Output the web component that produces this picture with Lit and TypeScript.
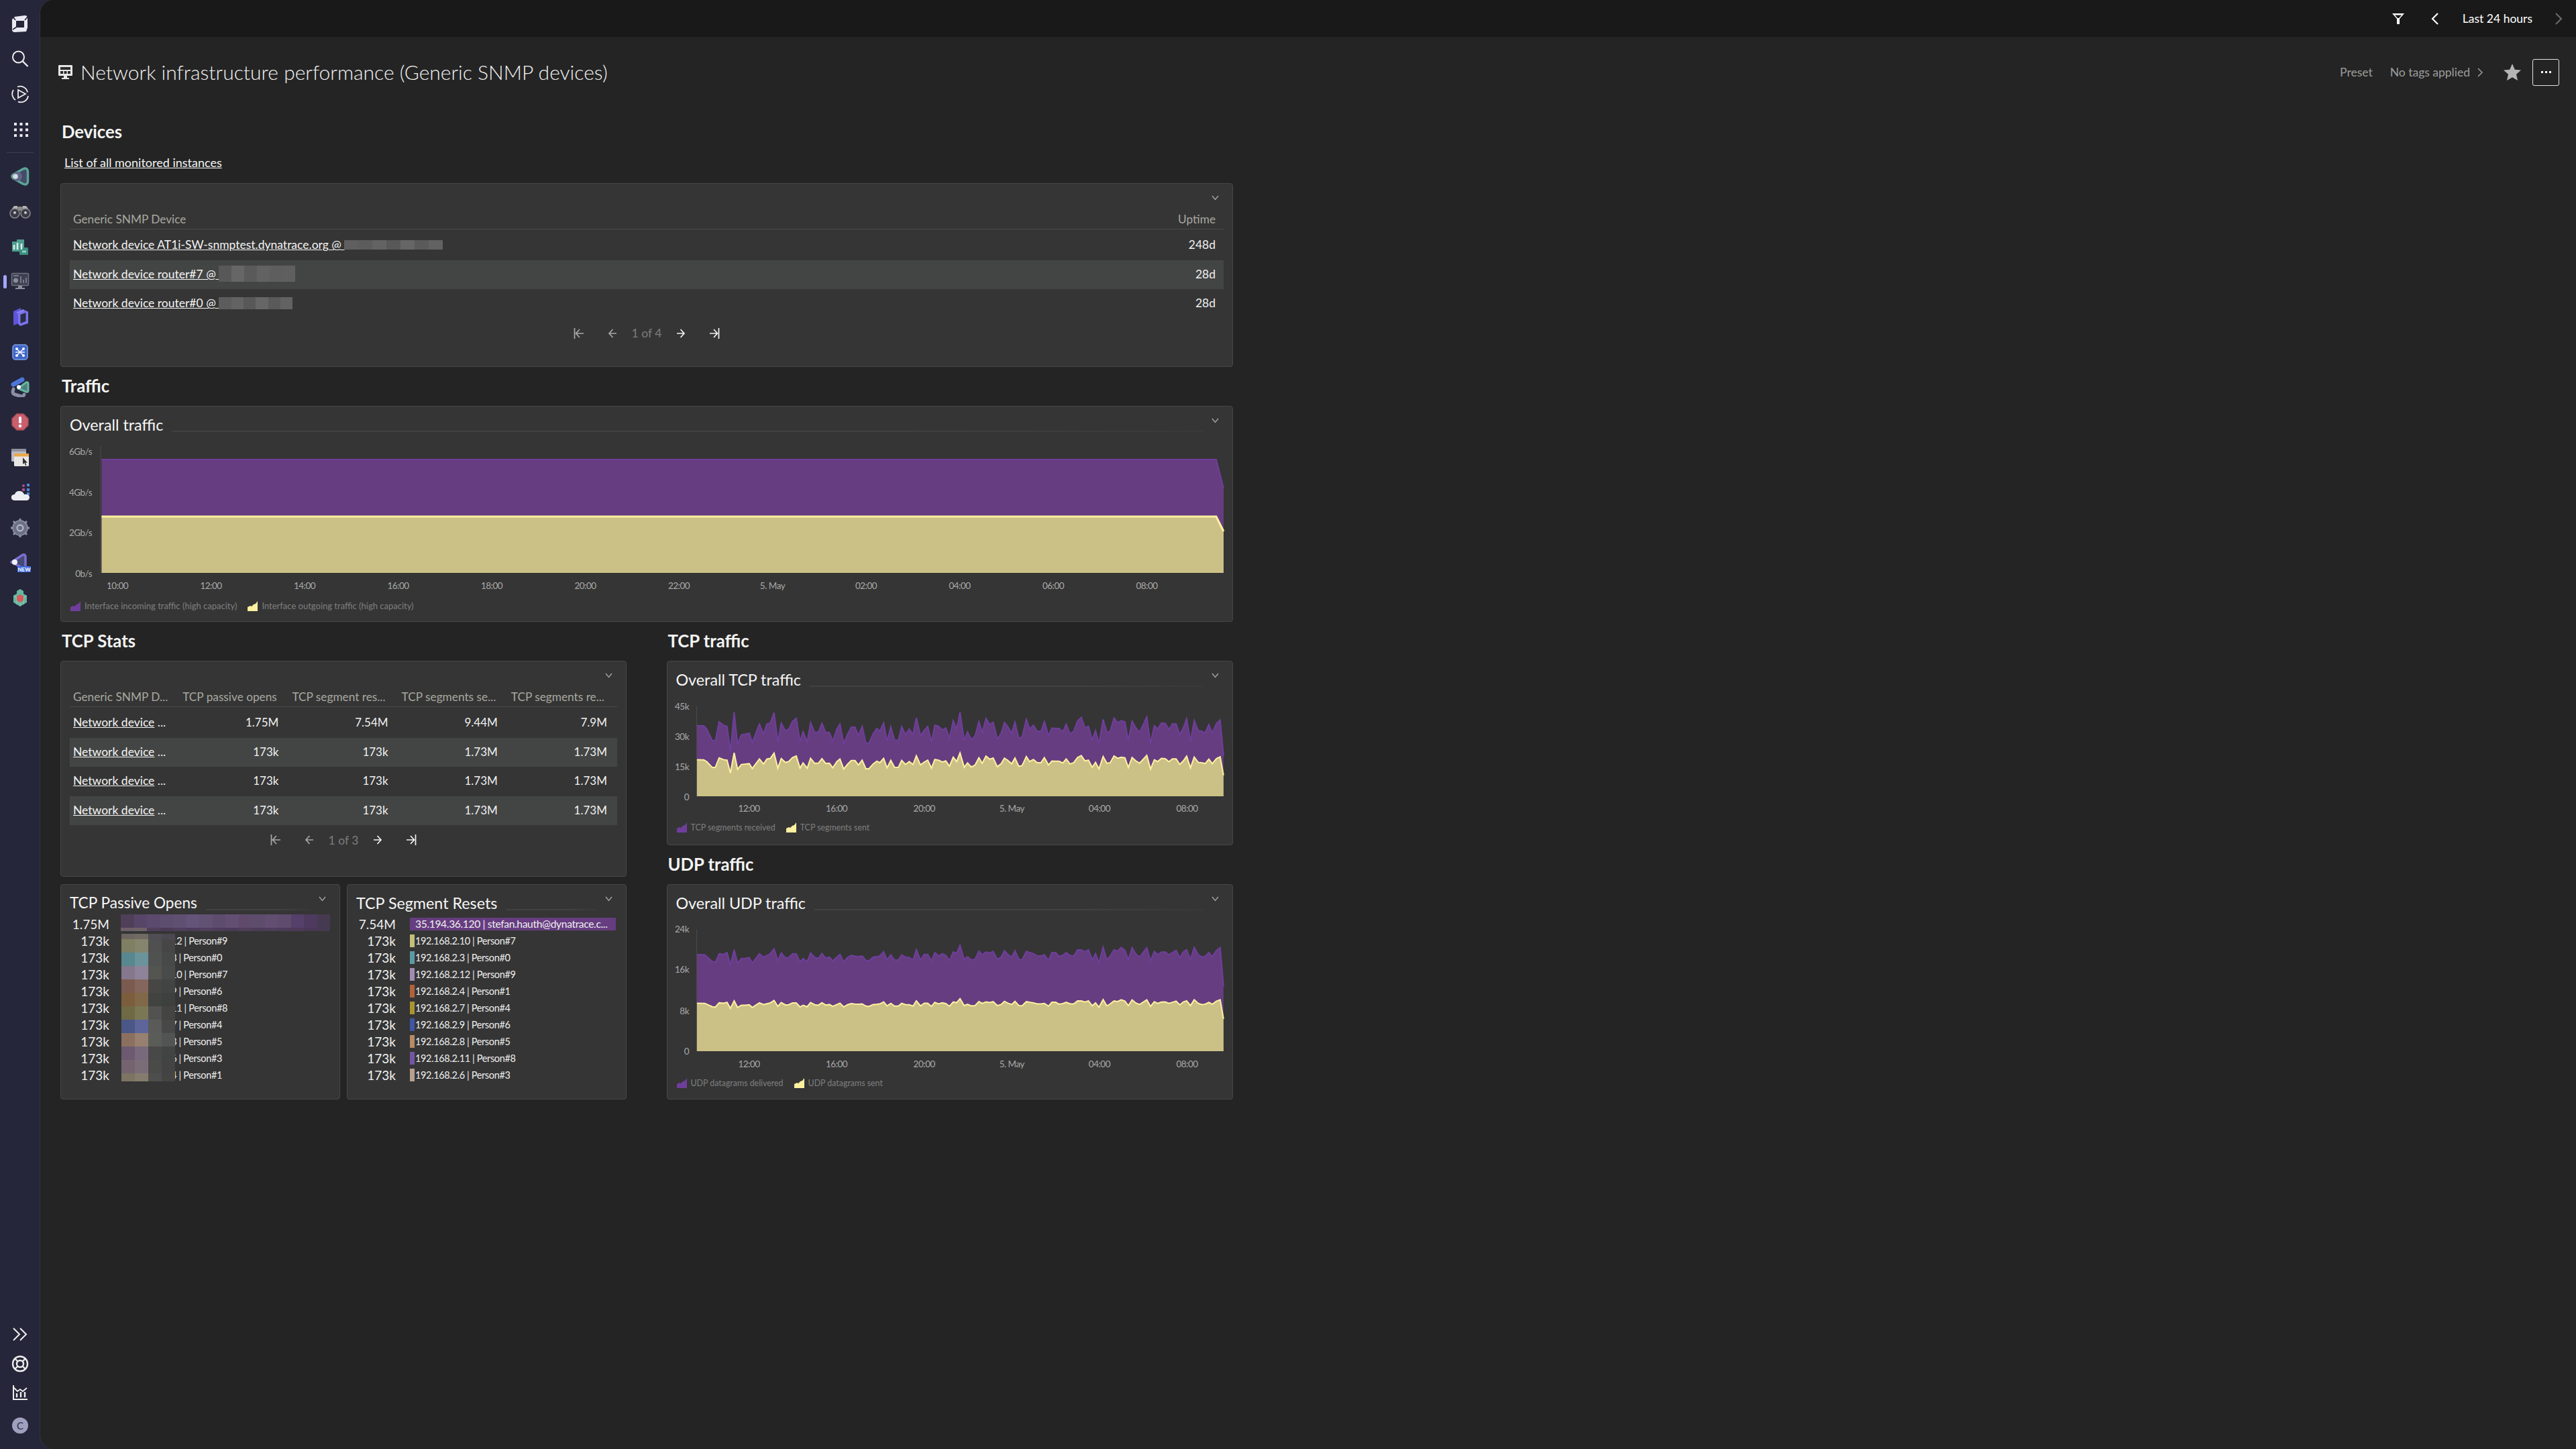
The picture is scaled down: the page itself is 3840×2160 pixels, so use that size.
import { LitElement, html, css, svg } from "lit";
import { customElement } from "lit/decorators.js";

const tcpTrace = [104,425,122,426,130,440,145,492,153,491,163,408,175,424,184,428,193,540,203,365,212,508,222,466,232,463,243,459,251,500,270,418,281,462,290,418,299,413,309,367,319,497,328,414,339,448,348,441,358,406,368,392,378,497,386,452,397,498,406,412,417,456,427,454,436,415,446,456,456,455,465,495,476,440,484,418,494,505,504,465,514,432,524,432,533,470,543,428,553,503,561,503,572,462,582,437,590,450,600,413,609,495,619,430,629,490,639,491,648,430,658,465,668,440,678,465,687,390,698,470,708,445,717,428,727,497,736,423,746,428,756,445,765,435,775,480,785,403,794,440,803,365,814,490,823,453,833,488,843,470,853,407,862,455,872,393,882,420,891,410,902,485,912,460,921,411,930,430,940,460,949,410,959,482,968,475,979,397,988,440,998,423,1008,450,1018,450,1027,407,1038,470,1047,436,1057,437,1066,438,1076,453,1085,418,1095,462,1105,450,1115,405,1125,388,1135,435,1144,428,1154,490,1163,447,1172,505,1183,397,1193,455,1202,450,1212,391,1222,412,1231,403,1241,408,1250,492,1260,405,1270,435,1280,455,1299,386,1309,505,1319,425,1328,440,1338,413,1348,415,1358,442,1367,417,1377,417,1387,465,1396,435,1405,394,1415,495,1425,402,1436,448,1445,450,1454,458,1464,420,1473,458,1484,415,1494,400,1503,560];
const udpTrace = [104,459,125,460,145,490,153,493,163,455,175,458,184,450,193,505,203,437,212,497,222,477,232,476,243,472,251,497,270,455,281,470,290,463,299,455,309,433,319,487,328,452,339,473,348,472,358,455,368,456,378,492,386,477,397,490,406,452,417,472,427,476,436,454,446,475,456,470,465,487,476,470,484,458,494,492,504,472,514,462,524,466,533,468,543,465,553,485,561,487,572,470,582,468,590,465,600,446,609,483,619,460,629,484,639,484,648,460,658,470,668,472,678,484,687,437,698,483,708,458,717,458,727,487,736,450,746,465,756,455,765,462,775,486,785,447,794,453,803,418,814,480,823,468,833,483,843,480,853,443,862,460,872,447,882,452,891,445,902,480,912,470,921,442,930,458,940,470,949,442,959,480,968,482,979,445,988,450,998,455,1008,465,1018,465,1027,460,1038,485,1047,450,1057,450,1066,467,1076,462,1085,450,1095,463,1105,465,1115,438,1125,438,1135,447,1144,437,1154,482,1163,455,1172,495,1183,426,1193,483,1202,465,1212,438,1222,443,1231,427,1241,440,1250,482,1260,428,1270,457,1280,470,1299,428,1309,487,1319,445,1328,460,1338,448,1348,447,1358,460,1367,450,1377,440,1387,473,1396,447,1405,437,1415,480,1425,427,1436,460,1445,470,1454,467,1464,450,1473,468,1484,440,1494,428,1503,600];

type Pt = [number, number];

function scale(trace: number[], yOff: number, base: number, ratio: number) {
  // trace was read off a zoomed crop, so map it back to chart pixels
  const top: Pt[] = [];
  const low: Pt[] = [];
  for (let i = 0; i < trace.length; i += 2) {
    const x = trace[i] / 1.782 - 27.5;
    top.push([x, trace[i + 1] / 3 + yOff]);
    low.push([x, (base - (base - trace[i + 1]) * ratio) / 3 + yOff]);
  }
  return { top, low };
}

function pts(p: Pt[]) {
  return p.map((q) => `${q[0].toFixed(1)},${q[1].toFixed(1)}`).join(" ");
}

function areas(top: Pt[], low: Pt[], bottom: number, sw: number) {
  const x0 = top[0][0];
  const x1 = top[top.length - 1][0];
  return svg`
    <polygon points="${x0},${bottom} ${pts(top)} ${x1},${bottom}" fill="#663d80"></polygon>
    <polyline points="${pts(top)}" fill="none" stroke="#6f3e9c" stroke-width="2"></polyline>
    <polygon points="${x0},${bottom} ${pts(low)} ${x1},${bottom}" fill="#cbc186"></polygon>
    <polyline points="${pts(low)}" fill="none" stroke="#fdf1a0" stroke-width="${sw}"></polyline>
  `;
}

const chev = html`<svg class="chev" width="11" height="8" viewBox="0 0 11 8"><path d="M1 1l4.500 5.500L10 1" fill="none" stroke="#a8a8a8" stroke-width="1.300"/></svg>`;

const legendIcon = (c: string) => html`<svg width="15" height="15" viewBox="0 0 15 15"><path d="M0 15V9l4-2 2 1 3-3 3-1 3-4v15z" fill="${c}"/></svg>`;

const grayA = ["#5a5a5a", "#5f5f5f", "#585858", "#626262", "#5c5c5c", "#666666", "#5e5e5e", "#636363"];

@customElement("app-root")
export class AppRoot extends LitElement {
  static styles = css`
    :host {
      display: flex;
      width: 100%;
      height: 2160px;
      background: #252639;
      font-family: Lato, "Noto Sans", sans-serif;
      color: #fff;
      overflow: hidden;
    }
    .side {
      width: 60px;
      flex: none;
      display: flex;
      flex-direction: column;
      align-items: center;
      padding: 9px 0 13px;
      box-sizing: border-box;
    }
    .side .it {
      height: 52.4px;
      width: 60px;
      display: flex;
      align-items: center;
      justify-content: center;
      position: relative;
      flex: none;
    }
    .side .it.lo {
      height: 43.5px;
    }
    .side .it.me {
      margin-top: 5.5px;
    }
    .side hr {
      border: 0;
      height: 1px;
      width: 40px;
      background: #3d3e52;
      margin: 8.5px 0;
      flex: none;
    }
    .side .active::before {
      content: "";
      position: absolute;
      left: 5px;
      top: 16px;
      width: 5px;
      height: 20px;
      border-radius: 2.5px;
      background: #a3a6ff;
    }
    .side .spacer {
      flex: 1;
    }
    .avatar {
      width: 24px;
      height: 24px;
      border-radius: 50%;
      background: #a09fbd;
      color: #20304f;
      font-size: 15px;
      line-height: 24px;
      text-align: center;
    }
    .main {
      flex: 1;
      min-width: 0;
      background: #242424;
      border-radius: 20px 0 0 20px;
      box-shadow: -1px 0 0 #33344a;
      overflow: hidden;
      display: flex;
      flex-direction: column;
    }
    .top {
      height: 55px;
      flex: none;
      background: #191919;
      display: flex;
      align-items: center;
      justify-content: flex-end;
      padding-right: 20px;
      font-size: 17.5px;
    }
    .top .filter {
      margin-right: 39px;
    }
    .top .prev {
      margin-right: 35px;
    }
    .top .next {
      margin-left: 33px;
    }
    .titlebar {
      height: 105px;
      flex: none;
      display: flex;
      align-items: center;
      padding: 0 25px 0 27px;
    }
    .titlebar .t-ic {
      margin-right: 12px;
    }
    h1 {
      font-weight: 300;
      font-size: 30px;
      margin: -2px 0 0;
      flex: 1;
      color: #f2f2f2;
    }
    .titlebar .pre {
      color: #9c9c9c;
      font-size: 17.5px;
      margin-right: 26px;
    }
    .titlebar .tags {
      color: #9c9c9c;
      font-size: 17.5px;
      margin-right: 11px;
    }
    .titlebar .star {
      margin: 0 17px 0 30px;
    }
    .more {
      width: 40px;
      height: 40px;
      box-sizing: border-box;
      border: 1.5px solid #e4e4e4;
      border-radius: 3px;
      display: flex;
      align-items: center;
      justify-content: center;
      gap: 3px;
    }
    .more i {
      width: 3px;
      height: 3px;
      background: #fff;
    }
    .page {
      width: 1748px;
      margin-left: 30px;
      padding-top: 18px;
    }
    h2 {
      height: 36px;
      line-height: 36px;
      font-size: 25.7px;
      font-weight: 700;
      margin: 10px 0 12px;
      padding-left: 2px;
      color: #f4f4f4;
    }
    h2.first {
      margin: 0;
    }
    .listlink {
      margin: 14px 0 17px 6px;
      height: 28px;
      line-height: 28px;
      font-size: 18px;
    }
    a {
      color: #f4f4f4;
      text-decoration: underline;
    }
    .card {
      background: #353535;
      border: 1px solid #474747;
      border-radius: 4px;
      box-sizing: border-box;
      padding: 8px 13px 0;
      position: relative;
    }
    .h274 { height: 274px; }
    .h275 { height: 275px; }
    .h321 { height: 321px; }
    .h322 { height: 322px; }
    .head {
      height: 38px;
      display: flex;
      flex: none;
    }
    .head.short {
      height: 29px;
    }
    .head .ttl {
      font-size: 23.3px;
      line-height: 38px;
      color: #f6f6f6;
      white-space: nowrap;
      margin-right: 13px;
    }
    .narrow .head .ttl {
      font-size: 22.6px;
    }
    .head .rule {
      flex: 1;
      height: 2px;
      margin: 28px 12px 0 0;
      background: linear-gradient(90deg, #414141 70%, #393939);
    }
    .head .chev {
      margin: 9px 7px 0 auto;
      flex: none;
    }
    .thead,
    .trow {
      display: grid;
      align-items: center;
      font-size: 17.5px;
    }
    .one {
      grid-template-columns: 1fr 90px;
    }
    .five {
      grid-template-columns: repeat(5, 1fr);
    }
    .thead {
      height: 30px;
      color: #a8a8a0;
      font-size: 17.25px;
      border-bottom: 1px solid #4a4a4a;
      margin-bottom: 2px;
    }
    .trow {
      height: 43.5px;
      box-sizing: border-box;
      padding-bottom: 2px;
      color: #f0f0f0;
    }
    .trow.alt {
      background: #434544;
    }
    .c {
      padding: 0 15px 0 5px;
      white-space: nowrap;
      min-width: 0;
    }
    .c.r {
      text-align: right;
    }
    .five .c.r {
      font-size: 17px;
    }
    .one .c.r {
      padding-right: 12px;
    }
    .devlink {
      display: flex;
      align-items: center;
    }
    .mos {
      display: inline-flex;
      flex-wrap: nowrap;
    }
    .mos span {
      display: block;
      flex: 1;
    }
    .pager {
      height: 44px;
      display: flex;
      align-items: center;
      justify-content: center;
      font-size: 17.5px;
      color: #7d7d7d;
    }
    .pager .lbl {
      margin: 0 22px 0 22px;
    }
    .pager svg.gap {
      margin-right: 35px;
    }
    .pager svg.gap2 {
      margin-left: 35px;
    }
    .plot {
      display: block;
      overflow: visible;
    }
    .plot text {
      font-size: 13.5px;
      fill: #a9a9a9;
      letter-spacing: -0.5px;
      font-family: Lato, "Noto Sans", sans-serif;
    }
    .legend {
      display: flex;
      align-items: center;
      height: 30px;
      margin-left: 1px;
      color: #7f7f7f;
      font-size: 13px;
    }
    .legend.sm {
      font-size: 12.4px;
    }
    .legend svg {
      margin-right: 6px;
    }
    .legend span {
      margin-right: 16px;
    }
    .cols {
      display: grid;
      grid-template-columns: 844px 844.5px;
      column-gap: 59.5px;
    }
    .pair {
      display: grid;
      grid-template-columns: 1fr 1fr;
      gap: 10px;
      margin-top: 11px;
    }
    .tr {
      height: 25px;
      display: flex;
      align-items: center;
      padding-right: 2px;
    }
    .tr .val {
      width: 59px;
      text-align: right;
      font-size: 19px;
      color: #f0f0f0;
      flex: none;
      margin-right: 18px;
    }
    .wide .tr .val {
      margin-right: 21px;
    }
    .tr .bar {
      flex: none;
      width: 6.5px;
      height: 19px;
    }
    .tr .txt {
      font-size: 14.5px;
      letter-spacing: -0.35px;
      color: #eee;
      padding-left: 1.5px;
      white-space: nowrap;
    }
    .tr .big {
      flex: 1;
      height: 19px;
      background: #663d80;
      font-size: 15.6px;
      letter-spacing: -0.35px;
      line-height: 19px;
      padding-left: 8px;
      white-space: nowrap;
      overflow: hidden;
      color: #eee;
    }
    .narrow .tr .txt {
      padding-left: 2px;
    }
    .cover {
      position: absolute;
      left: 89px;
      display: grid;
    }
    .cover span {
      display: block;
    }
  `;

  private sideIcons() {
    return [
      html`<svg width="28" height="28" viewBox="0 0 28 28"><path d="M6 4l15-2q4 0 4 4v14l-2 6-17 1q-4 0-4-4V8z" fill="#e9e9f2"/><path d="M8 10h12v10H8z" fill="#252639"/><path d="M3 23l6-4M21 9l5-6M7 9L4 5" stroke="#252639" stroke-width="1.600"/></svg>`,
      html`<svg width="28" height="28" viewBox="0 0 28 28"><circle cx="11.500" cy="11" r="8.500" fill="none" stroke="#eee" stroke-width="2"/><path d="M17.500 17l8 8" stroke="#eee" stroke-width="2.400"/></svg>`,
      html`<svg width="28" height="28" viewBox="0 0 28 28"><path d="M10 3.500a11 11 0 0 1 15 8M26 17a11 11 0 0 1-15 8.600M7 23a11 11 0 0 1-3-15" fill="none" stroke="#eee" stroke-width="1.800"/><path d="M11 8l11 6-11 6z" fill="none" stroke="#eee" stroke-width="1.800"/></svg>`,
      html`<svg width="24" height="24" viewBox="0 0 24 24" fill="#e9e9f0"><rect x="3" y="3" width="4" height="4"/><rect x="11.500" y="3" width="4" height="4"/><rect x="20" y="3" width="4" height="4"/><rect x="3" y="11.500" width="4" height="4"/><rect x="11.500" y="11.500" width="4" height="4"/><rect x="20" y="11.500" width="4" height="4"/><rect x="3" y="20" width="4" height="4"/><rect x="11.500" y="20" width="4" height="4"/><rect x="20" y="20" width="4" height="4"/></svg>`,
    ];
  }

  private appIcons() {
    return [
      html`<svg width="30" height="30" viewBox="0 0 30 30"><path d="M5 12L19 4q7-3 7.500 4v14q-.5 7-7.500 4L5 18q-4-3 0-6z" fill="#454b68" stroke="#5ba596" stroke-width="3.500" stroke-linejoin="round"/><circle cx="11" cy="15" r="7" fill="#5f678a"/><circle cx="8" cy="15" r="3.800" fill="#d8dce2"/></svg>`,
      html`<svg width="32" height="24" viewBox="0 0 32 24"><path d="M4 8l3-4h5l1 4zM19 8l1-4h5l3 4z" fill="#b5b5b5"/><rect x="13" y="5" width="6" height="6" fill="#8c8c8c"/><circle cx="8" cy="15" r="7" fill="#3a3a44" stroke="#8a8a90" stroke-width="1.500"/><circle cx="24" cy="15" r="7" fill="#3a3a44" stroke="#8a8a90" stroke-width="1.500"/><circle cx="8" cy="14" r="2" fill="#c9c9d0"/><circle cx="24" cy="14" r="2" fill="#c9c9d0"/></svg>`,
      html`<svg width="28" height="28" viewBox="0 0 28 28"><path d="M2 6h7V3h11v18H2z" fill="#4e9e90"/><rect x="13" y="15" width="13" height="11" rx="1" fill="#3b8d7f"/><path d="M5 18v-7M10 18V8M16 18v-9" stroke="#d9efe9" stroke-width="2.500"/><path d="M17 21h6" stroke="#8fd0c2" stroke-width="3"/></svg>`,
      html`<svg width="30" height="28" viewBox="0 0 30 28"><rect x="2.500" y="1.500" width="25" height="18" rx="1.500" fill="#3d4050" stroke="#6f7280" stroke-width="1.500"/><path d="M5 5h8" stroke="#8b8e9b" stroke-width="1.500"/><circle cx="8.500" cy="12" r="3.500" fill="#8b8e9b"/><path d="M16 16V6M20 16v-5M24 16V8" stroke="#8b8e9b" stroke-width="1.500"/><path d="M12 20h6v3h4v2H8v-2h4z" fill="#8b8e9b"/></svg>`,
      html`<svg width="28" height="30" viewBox="0 0 28 30"><path d="M4 7l11-5v22L4 28z" fill="#5e55d8"/><path d="M8 9l10-5 4 2-10 5z" fill="#8780f0"/><path d="M11 10l12-4 3 2v17l-12 4-3-3z" fill="#7a72ee"/><path d="M14.500 12l8-3v13l-8 3z" fill="#2c2d40"/></svg>`,
      html`<svg width="26" height="26" viewBox="0 0 26 26"><rect x="2" y="2" width="22" height="22" rx="4" fill="#3f66c8" stroke="#7ea0e8" stroke-width="1.500"/><path d="M8 8l10 10M18 8L8 18M6 13h14" stroke="#eef2fb" stroke-width="1.500"/><circle cx="8" cy="8" r="2" fill="#fff"/><circle cx="18" cy="8" r="2" fill="#fff"/><circle cx="8" cy="18" r="2" fill="#fff"/><circle cx="18" cy="18" r="2" fill="#fff"/></svg>`,
      html`<svg width="30" height="30" viewBox="0 0 30 30"><path d="M5 18l-1 4q0 3 3 4l10 3q3 0 4-3" fill="none" stroke="#8b8ea4" stroke-width="5" stroke-linecap="round"/><path d="M5 11L18 4" stroke="#4c77d8" stroke-width="7" stroke-linecap="round"/><path d="M12 17l12-9q3-1 3 2v10q0 3-3 2z" fill="#4e7f80" stroke="#66b5a0" stroke-width="3" stroke-linejoin="round"/><circle cx="13" cy="15" r="3" fill="#fff"/></svg>`,
      html`<svg width="28" height="28" viewBox="0 0 28 28"><path d="M9 2h10l7 7v10l-7 7H9l-7-7V9z" fill="#c95f6d" stroke="#a64a56" stroke-width="1.500"/><rect x="12" y="6" width="4" height="10" rx="1.500" fill="#fff"/><circle cx="14" cy="20" r="2.300" fill="#fff"/></svg>`,
      html`<svg width="28" height="28" viewBox="0 0 28 28"><rect x="1" y="1" width="22" height="19" rx="1.500" fill="#b9bac6"/><rect x="1" y="1" width="22" height="4" fill="#8f909c"/><rect x="5" y="8" width="22" height="19" rx="1.500" fill="#e9e7e6"/><rect x="5" y="8" width="22" height="4.500" fill="#e8a94a"/><path d="M18 14v10l2.500-2 1.500 4 1.500-.6-1.500-3.600h3z" fill="#333"/></svg>`,
      html`<svg width="30" height="30" viewBox="0 0 30 30"><rect x="25" y="2" width="4" height="4" fill="#4f87d8"/><rect x="25" y="9" width="4" height="4" fill="#4f87d8"/><rect x="25" y="15" width="4" height="4" fill="#4f87d8"/><circle cx="20" cy="5" r="2" fill="#b34a98"/><circle cx="20" cy="11" r="2.300" fill="#b34a98"/><path d="M6 27q-5-1-4-6 1-3 5-3 1-5 7-5 5 0 7 5 7-1 8 4 0 5-5 5z" fill="#eceef4"/></svg>`,
      html`<svg width="30" height="30" viewBox="0 0 30 30"><circle cx="15" cy="15" r="11" fill="#6b7085" stroke="#8e92a6" stroke-width="1.500"/><path d="M15 1v4M15 25v4M1 15h4M25 15h4M5 5l3 3M22 22l3 3M5 25l3-3M22 8l3-3" stroke="#8e92a6" stroke-width="3"/><circle cx="15" cy="15" r="4.500" fill="none" stroke="#c2c4d0" stroke-width="1.800"/></svg>`,
      html`<svg width="32" height="30" viewBox="0 0 32 30"><path d="M3 14L20 3q4-1 4 3v14q0 4-4 3z" fill="#444a78" stroke="#7c6fd0" stroke-width="3.500" stroke-linejoin="round"/><circle cx="8" cy="14" r="4" fill="#f2f2f6"/><rect x="12" y="20" width="20" height="9" rx="1" fill="#3a6ae0"/><text x="22" y="27.500" text-anchor="middle" font-size="8" font-weight="700" fill="#fff" font-family="Lato, sans-serif">NEW</text></svg>`,
      html`<svg width="26" height="28" viewBox="0 0 26 28"><path d="M13 1l5 3v4l5 3v10l-5 3-5 3-5-3-5-3V11l5-3V4z" fill="#66b5a0"/><path d="M3 11l5 3 5-3 5 3 5-3M13 11v16M8 14v10M18 14v10" stroke="#8fd0bd" stroke-width="1" fill="none"/><path d="M13 9l5 3v6l-5 3-5-3v-6z" fill="#d95a5a"/></svg>`,
    ];
  }

  private bottomIcons() {
    return [
      html`<svg width="28" height="24" viewBox="0 0 28 24"><path d="M4 3l9 9-9 9M14 3l9 9-9 9" fill="none" stroke="#eee" stroke-width="2"/></svg>`,
      html`<svg width="28" height="28" viewBox="0 0 28 28"><circle cx="14" cy="14" r="11" fill="none" stroke="#eee" stroke-width="2.400"/><circle cx="14" cy="14" r="5" fill="none" stroke="#eee" stroke-width="2.400"/><path d="M6 6l4.500 4.500M22 6l-4.500 4.500M6 22l4.500-4.500M22 22l-4.500-4.500" stroke="#eee" stroke-width="2.400"/></svg>`,
      html`<svg width="26" height="26" viewBox="0 0 26 26"><path d="M3 2v21h21" fill="none" stroke="#eee" stroke-width="2"/><path d="M3 5l6 6 4-3 4 3 6-5" fill="none" stroke="#eee" stroke-width="1.800"/><path d="M8 20v-6M14 20v-8M20 20v-8" stroke="#eee" stroke-width="2.400"/></svg>`,
    ];
  }

  private pager(label: string) {
    const g = "#a8a8a8";
    return html`<div class="pager">
      <svg class="gap" width="16" height="18" viewBox="0 0 16 18"><path d="M1.500 1v16M15 9H4M9 3L3.500 9 9 15" fill="none" stroke="${g}" stroke-width="1.700"/></svg>
      <svg width="14" height="18" viewBox="0 0 14 18"><path d="M13 9H2M7.500 3L2 9l5.500 6" fill="none" stroke="${g}" stroke-width="1.700"/></svg>
      <span class="lbl">${label}</span>
      <svg width="14" height="18" viewBox="0 0 14 18"><path d="M1 9h11M6.500 3L12 9l-5.500 6" fill="none" stroke="#f2f2f2" stroke-width="1.700"/></svg>
      <svg class="gap2" width="16" height="18" viewBox="0 0 16 18"><path d="M14.500 1v16M1 9h11M7 3l5.500 6L7 15" fill="none" stroke="#f2f2f2" stroke-width="1.700"/></svg>
    </div>`;
  }

  private mosaic(n: number, w: number, h: number, seed: number) {
    const cells = [];
    for (let i = 0; i < n; i++) cells.push(grayA[(i * 3 + seed) % grayA.length]);
    return html`<span class="mos" style="width:${w}px;height:${h}px">${cells.map((c) => html`<span style="background:${c}"></span>`)}</span>`;
  }

  private head(title?: string) {
    if (!title) return html`<div class="head short">${chev}</div>`;
    return html`<div class="head"><span class="ttl">${title}</span><span class="rule"></span>${chev}</div>`;
  }

  private devices() {
    const rows = [
      ["Network device AT1i-SW-snmptest.dynatrace.org @", "248d", 7, 147, 14, 1, false],
      ["Network device router#7 @", "28d", 6, 114, 24, 2, true],
      ["Network device router#0 @", "28d", 6, 110, 18, 4, false],
    ] as const;
    return html`<div class="card h274">
      ${this.head()}
      <div class="thead one"><div class="c">Generic SNMP Device</div><div class="c r">Uptime</div></div>
      ${rows.map((r) => html`<div class="trow one ${r[6] ? "alt" : ""}">
        <div class="c devlink"><a href="#">${r[0]}&nbsp;</a>${this.mosaic(r[2], r[3], r[4], r[5])}</div>
        <div class="c r">${r[1]}</div>
      </div>`)}
      ${this.pager("1 of 4")}
    </div>`;
  }

  private overall() {
    const top: Pt[] = [[47.5, 33], [1709, 33], [1720, 76]];
    const low: Pt[] = [[47.5, 118], [1709, 118], [1720, 140]];
    const ys: [string, number][] = [["6Gb/s", 21], ["4Gb/s", 82], ["2Gb/s", 142], ["0b/s", 203]];
    const xs = ["10:00", "12:00", "14:00", "16:00", "18:00", "20:00", "22:00", "5. May", "02:00", "04:00", "06:00", "08:00"];
    return html`<div class="card h322">
      ${this.head("Overall traffic")}
      <svg class="plot" width="1720" height="236" viewBox="0 0 1720 236">
        <line x1="46" y1="12" x2="46" y2="202" stroke="#4a4a4a"></line>
        ${ys.map((y) => svg`<text x="33" y="${y[1] + 5}" text-anchor="end">${y[0]}</text>`)}
        ${areas(top, low, 202, 3)}
        ${xs.map((t, i) => svg`<text x="${71 + i * 139.5}" y="226" text-anchor="middle">${t}</text>`)}
      </svg>
      <div class="legend">
        ${legendIcon("#6f3e9c")}<span>Interface incoming traffic (high capacity)</span>
        ${legendIcon("#fdf1a0")}<span>Interface outgoing traffic (high capacity)</span>
      </div>
    </div>`;
  }

  private smallChart(title: string, trace: number[], yOff: number, base: number, ratio: number, ys: [string, number][], plotBottom: number, xLabelY: number, leg: [string, string]) {
    const { top, low } = scale(trace, yOff, base, ratio);
    const xs = ["12:00", "16:00", "20:00", "5. May", "04:00", "08:00"];
    return html`<div class="card ${title.includes("TCP") ? "h275" : "h321"}">
      ${this.head(title)}
      <svg class="plot" width="816" height="${xLabelY + 13}" viewBox="0 0 816 ${xLabelY + 13}">
        <line x1="30.500" y1="${ys[0][1]}" x2="30.500" y2="${plotBottom}" stroke="#4a4a4a"></line>
        ${ys.map((y) => svg`<text x="19" y="${y[1] + 5}" text-anchor="end">${y[0]}</text>`)}
        ${areas(top, low, plotBottom, 2)}
        ${xs.map((t, i) => svg`<text x="${108.5 + i * 130.6}" y="${xLabelY + 5}" text-anchor="middle">${t}</text>`)}
      </svg>
      <div class="legend sm">
        ${legendIcon("#6f3e9c")}<span>${leg[0]}</span>
        ${legendIcon("#fdf1a0")}<span>${leg[1]}</span>
      </div>
    </div>`;
  }

  private tcpStats() {
    const rows = [
      ["1.75M", "7.54M", "9.44M", "7.9M"],
      ["173k", "173k", "1.73M", "1.73M"],
      ["173k", "173k", "1.73M", "1.73M"],
      ["173k", "173k", "1.73M", "1.73M"],
    ];
    return html`<div class="card h322">
      ${this.head()}
      <div class="thead five">
        <div class="c">Generic SNMP D...</div><div class="c">TCP passive opens</div><div class="c">TCP segment res...</div><div class="c">TCP segments se...</div><div class="c">TCP segments re...</div>
      </div>
      ${rows.map((r, i) => html`<div class="trow five ${i % 2 ? "alt" : ""}">
        <div class="c"><a href="#">Network device</a> ...</div>
        ${r.map((v) => html`<div class="c r">${v}</div>`)}
      </div>`)}
      ${this.pager("1 of 3")}
    </div>`;
  }

  private topList(title: string, first: [string, string], rows: [string, string][], cls: string, cover: unknown) {
    return html`<div class="card h321 ${cls}">
      ${this.head(title)}
      <div class="tr"><span class="val">${first[0]}</span><span class="big">${first[1]}</span></div>
      ${rows.map((r) => html`<div class="tr"><span class="val">173k</span><span class="bar" style="background:${r[0]}"></span><span class="txt">${r[1]}</span></div>`)}
      ${cover}
    </div>`;
  }

  private passiveCover() {
    const top = ["#4f3f58", "#574667", "#5b4a6d", "#5d4d6f", "#5f5072", "#63547a", "#615172", "#5e4c6d", "#644f74", "#5f4a6c", "#5e4c6c", "#624e70", "#5f4c6d", "#54406a", "#4d3a5e", "#463a50"];
    const topLow = ["#6d6068", "#6f6266", "#4f3f5a", "#4c3b58", "#503f5c", "#4d3c58", "#513f5d", "#4e3d5a", "#4c3b58", "#503e5b", "#4d3c58", "#4f3e5a", "#4d3c59", "#4c3a58", "#493755", "#463a50"];
    const col: string[][] = [
      ["#6d6660", "#716a63", "#514d55", "#4c4852"],
      ["#7f7f63", "#85856d", "#505050", "#464646"],
      ["#57878f", "#6b939c", "#505250", "#464948"],
      ["#85788d", "#8e8399", "#545451", "#484b49"],
      ["#7b5a50", "#85665c", "#484644", "#424443"],
      ["#7c5e3c", "#806848", "#414341", "#3e403f"],
      ["#6f6a43", "#7a7755", "#525250", "#444543"],
      ["#4b5786", "#5d659a", "#5a5a59", "#474847"],
      ["#8b705f", "#97806f", "#5a5c58", "#515452"],
      ["#6c5a70", "#786a7c", "#484848", "#424443"],
      ["#746470", "#7b6d78", "#4a4a48", "#424342"],
      ["#7d7463", "#857c6d", "#4e4e4c", "#444543"],
    ];
    return html`
      <div class="cover" style="top:44px;grid-template-columns:repeat(16,19.500px);grid-template-rows:20px 5px">
        ${[...top, ...topLow].map((c) => html`<span style="background:${c}"></span>`)}
      </div>
      <div class="cover" style="top:73px;left:90px;grid-template-columns:repeat(4,20px);grid-template-rows:8px repeat(10,20px) 12px">
        ${col.flat().map((c) => html`<span style="background:${c}"></span>`)}
      </div>
    `;
  }

  render() {
    const passive: [string, string][] = [
      ["#c5be79", "192.168.2.12 | Person#9"],
      ["#5b9aa5", "192.168.2.3 | Person#0"],
      ["#a28cb3", "192.168.2.10 | Person#7"],
      ["#b2613a", "192.168.2.9 | Person#6"],
      ["#a9942f", "192.168.2.11 | Person#8"],
      ["#3f55a5", "192.168.2.7 | Person#4"],
      ["#b98a64", "192.168.2.8 | Person#5"],
      ["#7456a0", "192.168.2.6 | Person#3"],
      ["#b9a08e", "192.168.2.4 | Person#1"],
    ];
    const resets: [string, string][] = [
      ["#c5be79", "192.168.2.10 | Person#7"],
      ["#5b9aa5", "192.168.2.3 | Person#0"],
      ["#a28cb3", "192.168.2.12 | Person#9"],
      ["#b2613a", "192.168.2.4 | Person#1"],
      ["#a9942f", "192.168.2.7 | Person#4"],
      ["#3f55a5", "192.168.2.9 | Person#6"],
      ["#b98a64", "192.168.2.8 | Person#5"],
      ["#7456a0", "192.168.2.11 | Person#8"],
      ["#b9a08e", "192.168.2.6 | Person#3"],
    ];
    return html`
      <nav class="side">
        ${this.sideIcons().map((i) => html`<div class="it">${i}</div>`)}
        <hr />
        ${this.appIcons().map((i, n) => html`<div class="it ${n === 3 ? "active" : ""}">${i}</div>`)}
        <div class="spacer"></div>
        ${this.bottomIcons().map((i) => html`<div class="it lo">${i}</div>`)}
        <div class="it lo me"><div class="avatar">C</div></div>
      </nav>
      <div class="main">
        <div class="top">
          <svg class="filter" width="20" height="20" viewBox="0 0 20 20"><path d="M1 2h18l-7 8v8H8v-8z" fill="#fff"/><path d="M5 4.500h10L11 9H9z" fill="#191919"/></svg>
          <svg class="prev" width="12" height="20" viewBox="0 0 12 20"><path d="M10 2L2 10l8 8" fill="none" stroke="#fff" stroke-width="2.200"/></svg>
          <span>Last 24 hours</span>
          <svg class="next" width="12" height="20" viewBox="0 0 12 20"><path d="M2 2l8 8-8 8" fill="none" stroke="#6a6a6a" stroke-width="2.200"/></svg>
        </div>
        <div class="titlebar">
          <svg class="t-ic" width="21" height="21" viewBox="0 0 21 21"><rect x="0" y="0" width="21" height="16" rx="1" fill="#e6e6e6"/><rect x="3" y="3" width="15" height="4" fill="#2a2a2a"/><rect x="3" y="9" width="4" height="4" fill="#2a2a2a"/><rect x="8.500" y="9" width="4" height="4" fill="#2a2a2a"/><rect x="14" y="9" width="4" height="4" fill="#2a2a2a"/><path d="M8 16h5v3h3v2H5v-2h3z" fill="#e6e6e6"/></svg>
          <h1>Network infrastructure performance (Generic SNMP devices)</h1>
          <span class="pre">Preset</span>
          <span class="tags">No tags applied</span>
          <svg width="9" height="14" viewBox="0 0 9 14"><path d="M1 1l6 6-6 6" fill="none" stroke="#9c9c9c" stroke-width="1.500"/></svg>
          <svg class="star" width="26" height="25" viewBox="0 0 26 25"><path d="M13 0l3.800 8.800 9.200.8-7 6.100 2.100 9.300L13 20.200 4.900 25 7 15.700 0 9.600l9.200-.8z" fill="#b4b4b4"/></svg>
          <div class="more"><i></i><i></i><i></i></div>
        </div>
        <div class="page">
          <h2 class="first">Devices</h2>
          <div class="listlink"><a href="#">List of all monitored instances</a></div>
          ${this.devices()}
          <h2>Traffic</h2>
          ${this.overall()}
          <div class="cols">
            <div>
              <h2>TCP Stats</h2>
              ${this.tcpStats()}
              <div class="pair">
                ${this.topList("TCP Passive Opens", ["1.75M", "35.194.36.120 | stefan.hauth@dynatrace.c..."], passive, "narrow", this.passiveCover())}
                ${this.topList("TCP Segment Resets", ["7.54M", "35.194.36.120 | stefan.hauth@dynatrace.c..."], resets, "wide", "")}
              </div>
            </div>
            <div>
              <h2>TCP traffic</h2>
              ${this.smallChart("Overall TCP traffic", tcpTrace, -92, 740, 0.515, [["45k", 21], ["30k", 66], ["15k", 111], ["0", 156]], 155, 173, ["TCP segments received", "TCP segments sent"])}
              <h2>UDP traffic</h2>
              ${this.smallChart("Overall UDP traffic", udpTrace, -95, 890, 0.495, [["24k", 20], ["16k", 80], ["8k", 142], ["0", 202]], 202, 221, ["UDP datagrams delivered", "UDP datagrams sent"])}
            </div>
          </div>
        </div>
      </div>
    `;
  }
}
